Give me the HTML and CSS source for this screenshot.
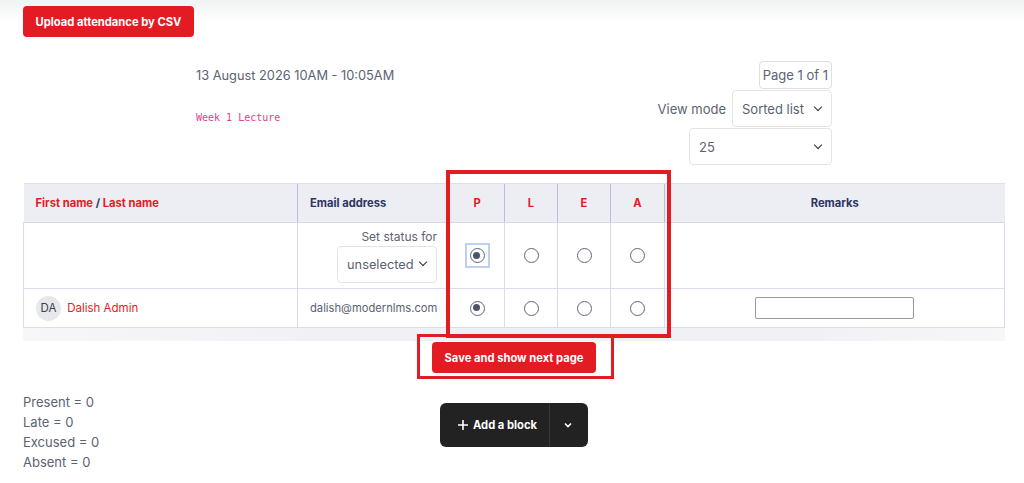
FILE: index.html
```html
<!DOCTYPE html>
<html lang="en">
<head>
    <meta charset="UTF-8">
    <meta name="viewport" content="width=device-width, initial-scale=1.0">
    <title>Take attendance</title>
    <link rel="stylesheet" href="styles.css">
</head>
<body>
    <div class="page">
        <div class="toolbar">
            <button class="btn btn-red">Upload attendance by CSV</button>
        </div>

        <div class="session">
            <div class="session-info">
                <div class="session-date">13 August 2026 10AM - 10:05AM</div>
                <code class="session-desc">Week 1 Lecture</code>
            </div>
            <div class="session-controls">
                <div class="pager">Page 1 of 1</div>
                <div class="view-row">
                    <span class="view-label">View mode</span>
                    <div class="select select-view">Sorted list <span class="chev"></span></div>
                </div>
                <div class="select select-per">25 <span class="chev"></span></div>
            </div>
        </div>

        <table class="takelist">
            <colgroup>
                <col style="width: 274px">
                <col style="width: 152px">
                <col style="width: 55px">
                <col style="width: 53px">
                <col style="width: 53px">
                <col style="width: 54px">
                <col>
            </colgroup>
            <thead>
                <tr>
                    <th class="left"><a>First name</a> / <a>Last name</a></th>
                    <th class="left">Email address</th>
                    <th class="red">P</th>
                    <th class="red">L</th>
                    <th class="red">E</th>
                    <th class="red">A</th>
                    <th>Remarks</th>
                </tr>
            </thead>
            <tbody>
                <tr class="row-setall">
                    <td></td>
                    <td class="right">
                        <div class="set-label">Set status for</div>
                        <div class="select select-status">unselected <span class="chev"></span></div>
                    </td>
                    <td><span class="focus"><span class="radio checked"></span></span></td>
                    <td><span class="radio"></span></td>
                    <td><span class="radio"></span></td>
                    <td><span class="radio"></span></td>
                    <td></td>
                </tr>
                <tr class="row-user">
                    <td class="left">
                        <span class="avatar">DA</span>
                        <a class="user-link">Dalish Admin</a>
                    </td>
                    <td class="left email">dalish@modernlms.com</td>
                    <td><span class="radio checked"></span></td>
                    <td><span class="radio"></span></td>
                    <td><span class="radio"></span></td>
                    <td><span class="radio"></span></td>
                    <td><input type="text" class="remarks"></td>
                </tr>
            </tbody>
        </table>
        <div class="table-foot"></div>

        <div class="actions">
            <button class="btn btn-red btn-save">Save and show next page</button>
        </div>

        <div class="bottom">
            <ul class="summary">
                <li>Present = 0</li>
                <li>Late = 0</li>
                <li>Excused = 0</li>
                <li>Absent = 0</li>
            </ul>
            <div class="add-block">
                <span class="add-main">
                    <svg width="12" height="12" viewBox="0 0 12 12"><path d="M6 1v10M1 6h10" stroke="#fff" stroke-width="1.6"/></svg>
                    Add a block
                </span>
                <span class="add-more">
                    <svg width="10" height="10" viewBox="0 0 10 10"><path d="M2 3.5l3 3 3-3" fill="none" stroke="#fff" stroke-width="1.6"/></svg>
                </span>
            </div>
            <div></div>
        </div>

        <!-- highlight frames -->
        <div class="mark mark-cols"></div>
        <div class="mark mark-save"></div>
    </div>
</body>
</html>
```

FILE: styles.css
```css
body {
    margin: 0;
    font-family: Inter, "Noto Sans", Arial, sans-serif;
    color: #5b6272;
    background: linear-gradient(#f1f2f3 0, #ffffff 22px) no-repeat, #ffffff;
}

.page {
    position: relative;
    width: 982px;
    padding: 6px 0 0 23px;
}

.btn {
    font-family: inherit;
    font-weight: 700;
    font-size: 11.2px;
    color: #fff;
    border: none;
    border-radius: 4px;
    cursor: pointer;
}

.btn-red {
    background: #e31b23;
}

.toolbar .btn {
    height: 31px;
    width: 171px;
    padding: 0;
}

/* session header */
.session {
    display: flex;
    justify-content: space-between;
    margin: 24px 173px 0 173px;
}

.session-date {
    font-size: 12.8px;
    line-height: 16px;
    margin-top: 7px;
}

.session-desc {
    display: block;
    margin-top: 28px;
    font-family: "DejaVu Sans Mono", "Liberation Mono", monospace;
    font-size: 10px;
    color: #e83e8c;
}

.session-controls {
    display: flex;
    flex-direction: column;
    align-items: flex-end;
    gap: 1px;
}

.pager {
    height: 26px;
    line-height: 26px;
    padding: 0 3px;
    border: 1px solid #dcdfe4;
    border-radius: 4px;
    font-size: 13px;
}

.view-row {
    display: flex;
    align-items: center;
    gap: 6px;
}

.view-label {
    font-size: 13px;
}

.select {
    box-sizing: border-box;
    display: flex;
    align-items: center;
    justify-content: space-between;
    border: 1px solid #e2e4ea;
    border-radius: 4px;
    font-size: 13px;
    background: #fff;
}

.select-view {
    width: 100px;
    height: 37px;
    padding: 0 10px 0 9px;
}

.select-per {
    width: 143px;
    height: 37px;
    padding: 0 10px 0 9px;
}

.chev {
    flex: none;
    width: 5px;
    height: 5px;
    border-right: 1.6px solid #2a2f3a;
    border-bottom: 1.6px solid #2a2f3a;
    transform: rotate(45deg);
    margin-top: -4px;
}

/* attendance table */
.takelist {
    width: 982px;
    margin-top: 18px;
    border-collapse: collapse;
    table-layout: fixed;
    font-size: 11.2px;
}

.takelist th {
    height: 38px;
    background: #eceef4;
    border-top: 1px solid #dcdeea;
    border-bottom: 1px solid #d5d8e8;
    border-left: 1px solid #b9bdd9;
    font-weight: 700;
    color: #2e3560;
    text-align: center;
    padding: 0 12px;
}

.takelist th:first-child {
    border-left: none;
}

.takelist th.left {
    text-align: left;
}

.takelist th a,
.takelist th.red {
    color: #e31b23;
}

.takelist td {
    border: 1px solid #dcdcee;
    text-align: center;
    padding: 0 12px;
}

.takelist td.left {
    text-align: left;
}

.takelist td.right {
    text-align: right;
}

.row-setall td {
    height: 65px;
}

.row-user td {
    height: 38px;
}

.set-label {
    font-size: 12px;
    margin-bottom: 2px;
}

.select-status {
    display: inline-flex;
    width: 100px;
    height: 37px;
    padding: 0 10px 0 9px;
    font-size: 12.8px;
}

.radio {
    display: inline-block;
    box-sizing: border-box;
    width: 15px;
    height: 15px;
    border: 1.5px solid #5f6678;
    border-radius: 50%;
    vertical-align: middle;
    position: relative;
}

.radio.checked::after {
    content: "";
    position: absolute;
    left: 2.5px;
    top: 2.5px;
    width: 7px;
    height: 7px;
    border-radius: 50%;
    background: #4d5468;
}

.focus {
    display: inline-block;
    box-sizing: border-box;
    width: 25px;
    height: 25px;
    padding: 3px 0 0;
    border: 2px solid #bcd0f6;
    line-height: 0;
}

.avatar {
    display: inline-block;
    width: 25px;
    height: 25px;
    line-height: 25px;
    border-radius: 50%;
    background: #e6e8ec;
    color: #3a4050;
    text-align: center;
    font-size: 11.5px;
    margin-right: 3px;
}

.user-link {
    color: #e31b23;
    font-size: 11.5px;
}

.email {
    font-size: 11.2px;
}

.remarks {
    box-sizing: border-box;
    width: 159px;
    height: 22px;
    border: 1px solid #999;
    border-radius: 2px;
}

.table-foot {
    height: 13px;
    background: linear-gradient(90deg, #f7f7f9, #f0f1f4 30%, #f0f1f4 80%, #f7f7f9);
}

.actions {
    display: flex;
    justify-content: center;
    margin-top: 1px;
}

.btn-save {
    width: 164px;
    height: 31px;
}

/* course summary and block button */
.bottom {
    display: grid;
    grid-template-columns: 1fr auto 1fr;
    margin-top: 19px;
}

.summary {
    list-style: none;
    margin: 0;
    padding: 0;
    font-size: 13px;
    line-height: 20px;
}

.add-block {
    display: flex;
    align-items: stretch;
    height: 44px;
    margin-top: 11px;
    background: #222;
    border-radius: 6px;
    color: #fff;
    font-weight: 700;
    font-size: 11.2px;
}

.add-main {
    display: flex;
    align-items: center;
    gap: 4px;
    padding: 0 12px 0 17px;
    border-right: 1px solid #3a3a3a;
}

.add-more {
    display: flex;
    align-items: center;
    padding: 0 15px 0 13px;
}

/* red highlight frames drawn over the table */
.mark {
    position: absolute;
    border: 4px solid #e31b23;
    box-sizing: border-box;
}

.mark-cols {
    left: 446px;
    top: 170px;
    width: 225px;
    height: 168px;
}

.mark-save {
    left: 417px;
    top: 334px;
    width: 197px;
    height: 45px;
    border-width: 3px;
}
```
